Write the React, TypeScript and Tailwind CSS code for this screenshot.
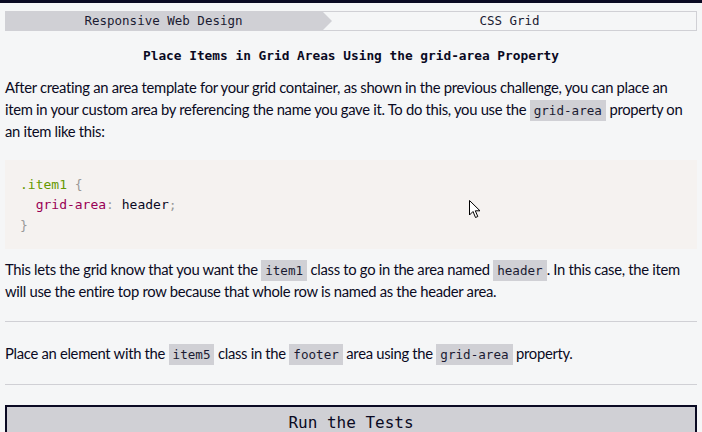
import React from "react";

const mono = "font-['DejaVu_Sans_Mono',monospace]";
const lato = "font-['Lato',sans-serif]";

function Code({ children }: { children: React.ReactNode }) {
  return (
    <code
      className={`${mono} bg-[#d0d0d5] px-[4px] py-[3px] text-[12.6px] tracking-normal text-[#1b1b32]`}
    >
      {children}
    </code>
  );
}

export default function App() {
  return (
    <div className={`relative h-[432px] w-[702px] overflow-hidden bg-[#f5f6f7] text-[#0a0a23] ${lato}`}>
      <div className="h-[3px] bg-[#0a0a23]" />
      <div className="px-[5px]">
        {/* breadcrumb */}
        <div className={`mt-[8px] flex h-[20px] text-[12.5px] ${mono}`}>
          <div className="flex w-[317px] items-center justify-center bg-[#d0d0d5] text-[#1b1b32]">
            Responsive Web Design
          </div>
          <svg width="10" height="20" viewBox="0 0 10 20" className="-mr-[10px] z-10 block shrink-0">
            <polygon points="0,0 10,10 0,20" fill="#d0d0d5" />
          </svg>
          <div className="flex flex-1 items-center justify-center border border-[#d0d0d5] text-[#1b1b32]">
            CSS Grid
          </div>
        </div>

        {/* title */}
        <h1 className={`mt-[16px] text-center text-[12.8px] font-bold leading-[18px] ${mono}`}>
          Place Items in Grid Areas Using the grid-area Property
        </h1>

        <p className="mt-[12px] text-[14.8px] leading-[21.5px] tracking-[-0.3px]">
          After creating an area template for your grid container, as shown in the previous challenge, you can place an
          item in your custom area by referencing the name you gave it. To do this, you use the <Code>grid-area</Code>{" "}
          property on an item like this:
        </p>

        <pre className={`mt-[17px] h-[89px] bg-[#f5f2f0] px-[15px] pt-[15px] text-[13px] leading-[20.5px] ${mono}`}>
          <span className="text-[#669900]">.item1</span> <span className="text-[#999999]">{"{"}</span>
          {"\n  "}
          <span className="text-[#990055]">grid-area</span>
          <span className="text-[#999999]">:</span> header<span className="text-[#999999]">;</span>
          {"\n"}
          <span className="text-[#999999]">{"}"}</span>
        </pre>

        <p className="mt-[10px] text-[14.8px] leading-[21.5px] tracking-[-0.3px]">
          This lets the grid know that you want the <Code>item1</Code> class to go in the area named <Code>header</Code>.
          In this case, the item will use the entire top row because that whole row is named as the header area.
        </p>

        <hr className="mt-[18px] border-t border-[#d0d0d5]" />

        <p className="mt-[21px] text-[14.8px] leading-[21.5px] tracking-[-0.3px]">
          Place an element with the <Code>item5</Code> class in the <Code>footer</Code> area using the{" "}
          <Code>grid-area</Code> property.
        </p>

        <hr className="mt-[19px] border-t border-[#d0d0d5]" />

        <button
          className={`mt-[20px] flex h-[40px] w-full items-start justify-center border-2 border-[#0a0a23] bg-[#d0d0d5] pt-[4px] text-[16px] leading-[24px] text-[#0a0a23] ${mono}`}
        >
          Run the Tests
        </button>
      </div>

      {/* mouse cursor */}
      <svg className="absolute left-[469px] top-[200px]" width="13" height="19" viewBox="0 0 13 19">
        <path
          d="M0.5 0.5 L0.5 15 L4 11.5 L6.5 17.5 L8.8 16.5 L6.3 10.8 L11 10.8 Z"
          fill="#ffffff"
          stroke="#000000"
          strokeWidth="1"
          strokeLinejoin="miter"
        />
      </svg>
    </div>
  );
}
